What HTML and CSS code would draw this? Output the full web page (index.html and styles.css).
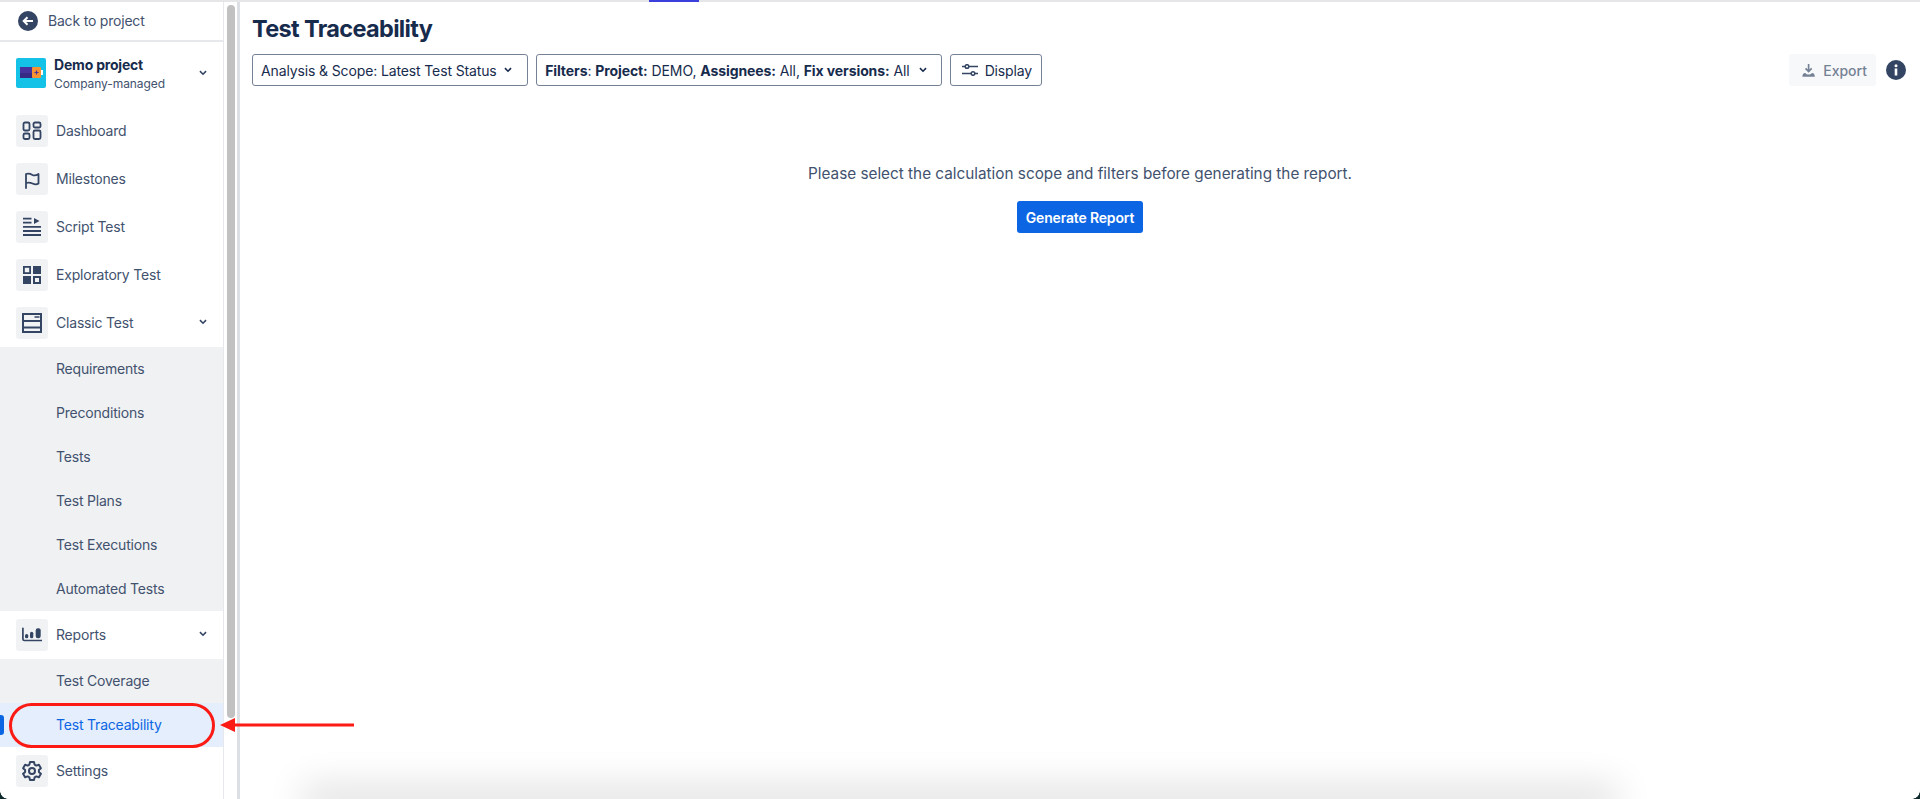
FILE: index.html
```html
<!DOCTYPE html>
<html lang="en">
<head>
<meta charset="utf-8">
<title>Test Traceability</title>
<link rel="stylesheet" href="styles.css">
</head>
<body>
<div class="app">
  <div class="tab-mark"></div>
  <aside class="sidebar">
    <nav class="nav">
      <a class="back">
        <svg class="back-icon" viewBox="0 0 20 20"><circle cx="10" cy="10" r="10" fill="#344563"/><path d="M15 10H6M9.500 6.200 5.700 10l3.800 3.800" fill="none" stroke="#fff" stroke-width="2"/></svg>
        <span>Back to project</span>
      </a>
      <div class="project">
        <svg class="project-logo" viewBox="0 0 30 30"><rect width="30" height="30" rx="2" fill="#14c2e8"/><rect x="4" y="9" width="13" height="11" fill="#45329c"/><rect x="4" y="15" width="13" height="5" fill="#362a85"/><rect x="16" y="9" width="9" height="11" rx="1" fill="#f79232"/><rect x="25" y="12" width="2" height="5" fill="#fff"/><path d="M20.500 12.500v4M18.500 14.500h4" stroke="#45329c" stroke-width="1.200"/></svg>
        <div class="project-text">
          <strong>Demo project</strong>
          <span>Company-managed</span>
        </div>
        <svg class="chev" viewBox="0 0 10 7"><path d="M1.200 1.200 5 5l3.800-3.800" fill="none" stroke="#344563" stroke-width="2"/></svg>
      </div>
      <div class="items">
        <a class="item"><span class="ibox"><svg viewBox="0 0 20 20"><g fill="none" stroke="#344563" stroke-width="1.800"><rect x="1.500" y="1.500" width="6" height="8" rx="1.500"/><rect x="11.500" y="1.500" width="7" height="5" rx="1.500"/><rect x="1.500" y="12.500" width="6" height="5.500" rx="1.500"/><rect x="11.500" y="9.500" width="7" height="8.500" rx="1.500"/></g></svg></span>Dashboard</a>
        <a class="item"><span class="ibox"><svg viewBox="0 0 20 20"><path d="M4 19V5c3-1 4-.5 6.500 1 2 1 4 .3 6-1v9.500c-2 1.500-4 1-6 0-2.500-1.200-4-1.200-6.500-.5" fill="none" stroke="#344563" stroke-width="1.800" stroke-linecap="round" stroke-linejoin="round"/></svg></span>Milestones</a>
        <a class="item"><span class="ibox"><svg viewBox="0 0 20 20"><path d="M1 1.600h8.500M1 5.600h8.500M1 9.800h18M1 14h18M1 18h18" stroke="#344563" stroke-width="1.800" fill="none"/><path d="M12 1v6l5.500-3z" fill="#344563"/></svg></span>Script Test</a>
        <a class="item"><span class="ibox"><svg viewBox="0 0 20 20"><rect x="1.900" y="1.900" width="6.200" height="6.200" fill="none" stroke="#344563" stroke-width="1.800"/><rect x="11" y="1" width="8" height="8" fill="#344563"/><rect x="1" y="11" width="8" height="8" fill="#344563"/><rect x="12" y="12" width="6" height="6" fill="none" stroke="#344563" stroke-width="2"/></svg></span>Exploratory Test</a>
        <a class="item"><span class="ibox"><svg viewBox="0 0 20 20"><rect x="1" y="1" width="18" height="18" fill="none" stroke="#344563" stroke-width="2"/><path d="M1 8h18M1 14.500h18" stroke="#344563" stroke-width="1.800"/><path d="M12.500 4h5" stroke="#344563" stroke-width="1.500"/></svg></span>Classic Test<svg class="chev item-chev" viewBox="0 0 10 7"><path d="M1.200 1.200 5 5l3.800-3.800" fill="none" stroke="#344563" stroke-width="2"/></svg></a>
        <div class="sub">
          <a class="sub-item">Requirements</a>
          <a class="sub-item">Preconditions</a>
          <a class="sub-item">Tests</a>
          <a class="sub-item">Test Plans</a>
          <a class="sub-item">Test Executions</a>
          <a class="sub-item">Automated Tests</a>
        </div>
        <a class="item"><span class="ibox"><svg viewBox="0 0 20 20"><path d="M.900 3.300v10.700c0 1 .5 1.500 1.500 1.500H19.500" fill="none" stroke="#344563" stroke-width="1.700" stroke-linecap="round"/><rect x="3" y="9" width="3.300" height="4.300" rx="1.600" fill="#344563"/><rect x="8" y="6.700" width="3.300" height="6.600" rx="1.600" fill="#344563"/><rect x="13.700" y="3.300" width="5" height="10" rx="2.200" fill="#344563"/></svg></span>Reports<svg class="chev item-chev" viewBox="0 0 10 7"><path d="M1.200 1.200 5 5l3.800-3.800" fill="none" stroke="#344563" stroke-width="2"/></svg></a>
        <div class="sub">
          <a class="sub-item">Test Coverage</a>
          <a class="sub-item active">Test Traceability</a>
        </div>
        <a class="item"><span class="ibox"><svg viewBox="0 0 20 20"><g fill="none" stroke="#344563" stroke-width="2" stroke-linejoin="round"><path d="M8 1h4l.6 2.600 1.700 1 2.600-.8 2 3.400-2 1.800v2l2 1.800-2 3.400-2.600-.8-1.700 1L12 19H8l-.6-2.600-1.700-1-2.600.8-2-3.400 2-1.800V9L1.100 7.200l2-3.400 2.600.8 1.700-1z"/><circle cx="10" cy="10" r="3"/></g></svg></span>Settings</a>
      </div>
    </nav>
    <div class="scrollbar"><div class="thumb"></div></div>
  </aside>
  <main class="main">
    <h1>Test Traceability</h1>
    <div class="toolbar">
      <button class="btn btn-scope">Analysis &amp; Scope: Latest Test Status<svg class="btn-chev" viewBox="0 0 10 7"><path d="M1.200 1.200 5 5l3.800-3.800" fill="none" stroke="#172b4d" stroke-width="2"/></svg></button>
      <button class="btn btn-filters"><span><b>Filters</b>: <b>Project:</b> DEMO, <b>Assignees:</b> All, <b>Fix versions:</b> All</span><svg class="btn-chev" viewBox="0 0 10 7"><path d="M1.200 1.200 5 5l3.800-3.800" fill="none" stroke="#172b4d" stroke-width="2"/></svg></button>
      <button class="btn btn-display"><svg class="display-icon" viewBox="0 0 16 12"><g fill="none" stroke="#344563" stroke-width="1.500"><path d="M0 2.500h3M7 2.500h9M0 9.500h9M13 9.500h3"/><circle cx="5" cy="2.500" r="1.800"/><circle cx="11" cy="9.500" r="1.800"/></g></svg>Display</button>
      <div class="spacer"></div>
      <button class="btn-export"><svg class="export-icon" viewBox="0 0 16 16"><path d="M8 0v9M4.300 5.500 8 9.300l3.700-3.800" fill="none" stroke="#758195" stroke-width="2"/><path d="M.500 15.500c0-2.500 1-4.500 3.500-4.500 1 1.300 2.500 1.800 4 1.800s3-.5 4-1.800c2.500 0 3.500 2 3.500 4.500z" fill="#758195"/></svg>Export</button>
      <svg class="info" viewBox="0 0 20 20"><circle cx="10" cy="10" r="10" fill="#344563"/><rect x="8.700" y="8.500" width="2.600" height="7" fill="#fff"/><circle cx="10" cy="5.800" r="1.500" fill="#fff"/></svg>
    </div>
    <div class="empty">
      <p>Please select the calculation scope and filters before generating the report.</p>
      <button class="btn-primary">Generate Report</button>
    </div>
  </main>
  <div class="bottom-shadow"></div>
  <div class="callout"></div>
  <svg class="arrow" viewBox="0 0 134 14"><path d="M134 7H12" stroke="#fb1a14" stroke-width="3"/><path d="M0 7 15 0v14z" fill="#fb1a14"/></svg>
  <div class="corner corner-left"></div>
  <div class="corner corner-right"></div>
</div>
</body>
</html>
```

FILE: styles.css
```css
* { box-sizing: border-box; }
html, body { margin: 0; height: 100%; overflow: hidden; background: #fff; }
body { font-family: Inter, "Liberation Sans", sans-serif; color: #172b4d; }
a { display: flex; color: inherit; text-decoration: none; }
button { font-family: inherit; cursor: pointer; }

.app { position: relative; display: flex; height: 799px; padding-top: 2px; overflow: hidden; }
.app::before { content: ""; position: absolute; left: 0; right: 0; top: 0; height: 2px; background: #e6e6e8; }
.tab-mark { position: absolute; left: 649px; top: 0; width: 50px; height: 2px; background: #3b3fdb; }

.sidebar { display: flex; width: 240px; flex: none; }
.nav { width: 224px; flex: none; border-right: 1px solid #e6e8ec; letter-spacing: -0.2px; }
.back { align-items: center; gap: 10px; height: 40px; padding: 0 18px 1px; font-size: 14px; color: #42526e; border-bottom: 2px solid #e6e8ec; }
.back-icon { width: 20px; height: 20px; }
.project { display: flex; align-items: center; height: 58px; margin-top: 2px; padding: 0 16px; }
.project-logo { width: 30px; height: 30px; flex: none; }
.project-text { display: flex; flex-direction: column; gap: 3px; margin-left: 8px; flex: 1; }
.project-text strong { font-size: 14px; line-height: 17px; font-weight: 700; color: #172b4d; }
.project-text span { font-size: 12px; line-height: 15px; color: #42526e; letter-spacing: -0.08px; }
.chev { width: 8px; height: 6px; flex: none; }
.items { margin-top: 5px; }
.item { align-items: center; height: 48px; padding: 0 16px 2px; font-size: 14px; color: #42526e; }
.ibox { display: flex; align-items: center; justify-content: center; width: 32px; height: 32px; margin: 2px 8px 0 0; border-radius: 3px; background: #f1f2f4; }
.ibox svg { width: 20px; height: 20px; }
.item-chev { margin-left: auto; }
.sub { background: #f0f1f3; }
.sub-item { align-items: center; height: 44px; padding: 0 0 2px 56px; font-size: 14px; color: #42526e; }
.sub-item.active { position: relative; background: #e4eefc; color: #0c66e4; }
.sub-item.active::before { content: ""; position: absolute; left: 0; top: 12px; width: 4px; height: 20px; border-radius: 0 3px 3px 0; background: #0c66e4; }

.scrollbar { width: 16px; flex: none; padding: 3px 1px 0 3px; background: #fff; border-right: 3px solid #dcdfe4; }
.thumb { width: 8px; height: 713px; border-radius: 4px; background: #c1c1c1; }

.main { flex: 1; min-width: 0; padding: 0 12px; }
h1 { margin: 11px 0 0; font-size: 23.500px; line-height: 32px; font-weight: 700; color: #172b4d; letter-spacing: -0.65px; }
.toolbar { display: flex; align-items: center; gap: 8px; margin-top: 9px; padding-right: 2px; }
.btn { display: flex; align-items: center; height: 32px; padding: 0 8px; font-size: 14px; letter-spacing: -0.13px; color: #172b4d; background: #fff; border: 1px solid #758195; border-radius: 3px; white-space: nowrap; }
.btn b { font-weight: 700; }
.btn-chev { width: 8px; height: 6px; margin: 0 6px 0 9px; }
.btn-scope .btn-chev { margin: 0 7px 0 7.500px; }
.btn-filters { letter-spacing: -0.09px; }
.btn-display { padding: 0 9px 0 11px; }
.display-icon { width: 16px; height: 12px; margin-right: 7px; }
.spacer { flex: 1; }
.btn-export { display: flex; align-items: center; width: 87px; height: 32px; padding: 0 9px 0 13px; border: 0; border-radius: 3px; background: #f7f8f9; color: #758195; font-size: 14px; font-weight: 500; }
.export-icon { width: 15px; height: 15px; margin-right: 8px; }
.info { width: 20px; height: 20px; margin-left: 2px; }

.empty { display: flex; flex-direction: column; align-items: center; margin-top: 76px; }
.empty p { margin: 0; font-size: 15.300px; line-height: 24px; color: #42526e; }
.btn-primary { height: 32px; width: 126px; margin-top: 15px; padding: 0; border: 0; border-radius: 3px; background: #0c66e4; color: #fff; font-size: 14px; font-weight: 600; letter-spacing: -0.17px; }

.bottom-shadow { position: absolute; left: 302px; top: 799px; width: 1316px; height: 30px; box-shadow: 0 -14px 36px rgba(0,0,0,.125); }
.callout { position: absolute; left: 9px; top: 703px; width: 206px; height: 45px; border: 3px solid #fb1a14; border-radius: 23px; }
.arrow { position: absolute; left: 220px; top: 718px; width: 134px; height: 14px; }
.corner { position: absolute; bottom: 0; width: 8px; height: 8px; }
.corner-left { left: 0; background: radial-gradient(circle at 100% 0, transparent 7.500px, #0f2a2a 8px); }
.corner-right { right: 0; background: radial-gradient(circle at 0 0, transparent 7.500px, #0f2a2a 8px); }
```
